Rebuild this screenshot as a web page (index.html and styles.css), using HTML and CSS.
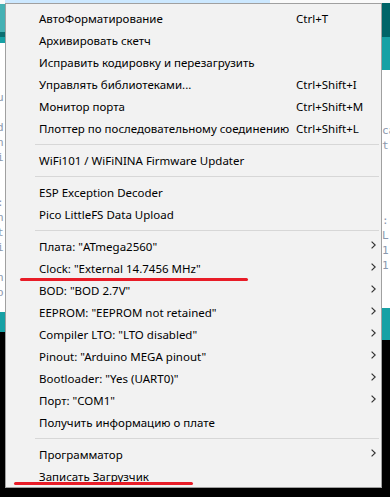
FILE: index.html
```html
<!DOCTYPE html>
<html lang="ru">
<head>
  <meta charset="UTF-8" />
  <meta name="viewport" content="width=device-width, initial-scale=1.0"/>
  <title>Инструменты</title>
  <link rel="stylesheet" href="styles.css">
</head>
<body>
  <div class="menubar">
    <div class="active"></div>
  </div>

  <div class="ide">
    <div class="strip strip-left">
      <div class="band toolbar"></div>
      <div class="band toolbar-dark"></div>
      <div class="band teal" style="height: 6px"></div>
      <div class="editor editor-left">
        <div></div><div></div><div></div><div>u</div><div></div><div>d</div><div>n</div><div>i</div>
        <div></div><div></div><div>:</div><div>n</div><div>t</div><div>i</div><div></div><div>n</div><div>o</div>
      </div>
      <div class="band teal" style="height: 20px"></div>
      <div class="console"></div>
    </div>

    <div class="middle"></div>

    <div class="strip strip-right">
      <div class="band header-dark"></div>
      <div class="band teal" style="height: 33px"></div>
      <div class="editor editor-right">
        <div></div><div></div><div></div><div>ca</div><div>t</div><div></div><div></div><div></div>
        <div></div><div>:</div><div>L</div><div>1.</div><div>1</div>
      </div>
      <div class="band teal" style="height: 32px"></div>
      <div class="console"></div>
    </div>
  </div>

  <!-- Tools menu -->
  <div class="menu">
    <div class="item"><span>АвтоФорматирование</span><span>Ctrl+T</span></div>
    <div class="item"><span>Архивировать скетч</span></div>
    <div class="item"><span>Исправить кодировку и перезагрузить</span></div>
    <div class="item"><span>Управлять библиотеками...</span><span>Ctrl+Shift+I</span></div>
    <div class="item"><span>Монитор порта</span><span>Ctrl+Shift+M</span></div>
    <div class="item"><span>Плоттер по последовательному соединению</span><span>Ctrl+Shift+L</span></div>
    <div class="sep"></div>
    <div class="item"><span>WiFi101 / WiFiNINA Firmware Updater</span></div>
    <div class="sep"></div>
    <div class="item"><span>ESP Exception Decoder</span></div>
    <div class="item"><span>Pico LittleFS Data Upload</span></div>
    <div class="sep"></div>
    <div class="item sub"><span>Плата: "ATmega2560"</span></div>
    <div class="item sub"><span>Clock: "External 14.7456 MHz"</span></div>
    <div class="item sub"><span>BOD: "BOD 2.7V"</span></div>
    <div class="item sub"><span>EEPROM: "EEPROM not retained"</span></div>
    <div class="item sub"><span>Compiler LTO: "LTO disabled"</span></div>
    <div class="item sub"><span>Pinout: "Arduino MEGA pinout"</span></div>
    <div class="item sub"><span>Bootloader: "Yes (UART0)"</span></div>
    <div class="item sub"><span>Порт: "COM1"</span></div>
    <div class="item"><span>Получить информацию о плате</span></div>
    <div class="sep"></div>
    <div class="item sub"><span>Программатор</span></div>
    <div class="item"><span>Записать Загрузчик</span></div>
  </div>

  <!-- hand-drawn red underlines -->
  <div class="mark mark-clock"></div>
  <div class="mark mark-boot"></div>
</body>
</html>
```

FILE: styles.css
```css
* {
  box-sizing: border-box;
}
body {
  margin: 0;
  width: 390px;
  height: 497px;
  overflow: hidden;
  position: relative;
  background: #000;
  font-family: 'Noto Sans', sans-serif;
}

/* IDE behind the menu */
.menubar {
  height: 3px;
  background: #fafafa;
  display: flex;
}
.menubar .active {
  margin-left: 5px;
  width: 265px;
  background: #cce8ff;
}

.ide {
  display: flex;
  height: 494px;
}
.strip {
  display: flex;
  flex-direction: column;
}
.strip-left {
  width: 5px;
}
.strip-right {
  width: 9px;
}
.middle {
  flex: 1;
}

.band {
  flex: none;
}
.teal {
  background: #17a1a5;
}
.toolbar {
  height: 29px;
  background: #45b1b4;
  border-top: 1px solid #fafafa;
}
.toolbar-dark {
  height: 5px;
  background: #0b6f72;
}
.header-dark {
  height: 34px;
  background: #006468;
}

.editor {
  flex: none;
  background: #fff;
  overflow: hidden;
  font-family: 'DejaVu Sans Mono', monospace;
  font-size: 11px;
  line-height: 15px;
  color: #8b98ad;
  white-space: nowrap;
}
.editor div {
  height: 15px;
}
.editor-left {
  height: 269px;
  padding-top: 2px;
  text-indent: -3px;
}
.editor-right {
  height: 238px;
  padding-top: 8px;
  padding-left: 1px;
}
.console {
  flex: 1;
  background: #000;
}

/* menu */
.menu {
  position: absolute;
  left: 5px;
  top: 3px;
  width: 377px;
  height: 485px;
  padding-top: 3px;
  background: #f2f2f2;
  border: 1px solid #a0a0a0;
}
.item {
  display: grid;
  grid-template-columns: 257px 72px 12px;
  align-items: center;
  height: 22px;
  padding-left: 33px;
  font-size: 11.5px;
  color: #000;
  white-space: nowrap;
}
.item.sub::after {
  content: "";
  grid-column: 3;
  width: 5px;
  height: 8px;
  margin: -2px 0 0 3px;
  background: url("data:image/svg+xml,%3Csvg xmlns='http://www.w3.org/2000/svg' width='5' height='8'%3E%3Cpath d='M0.6 0.6 L4.2 4 L0.6 7.4' fill='none' stroke='%23333' stroke-width='1.2'/%3E%3C/svg%3E") no-repeat;
}
.item.sub span {
  grid-column: 1;
}
.sep {
  height: 10px;
  display: flex;
  align-items: center;
  padding: 0 2px 0 29px;
}
.sep::before {
  content: "";
  flex: 1;
  height: 1px;
  background: #d7d7d7;
}

.mark {
  position: absolute;
  height: 3px;
  border-radius: 2px;
  background: #e81c27;
}
.mark-clock {
  left: 20px;
  top: 278px;
  width: 228px;
}
.mark-boot {
  left: 14px;
  top: 482px;
  width: 179px;
}
```
